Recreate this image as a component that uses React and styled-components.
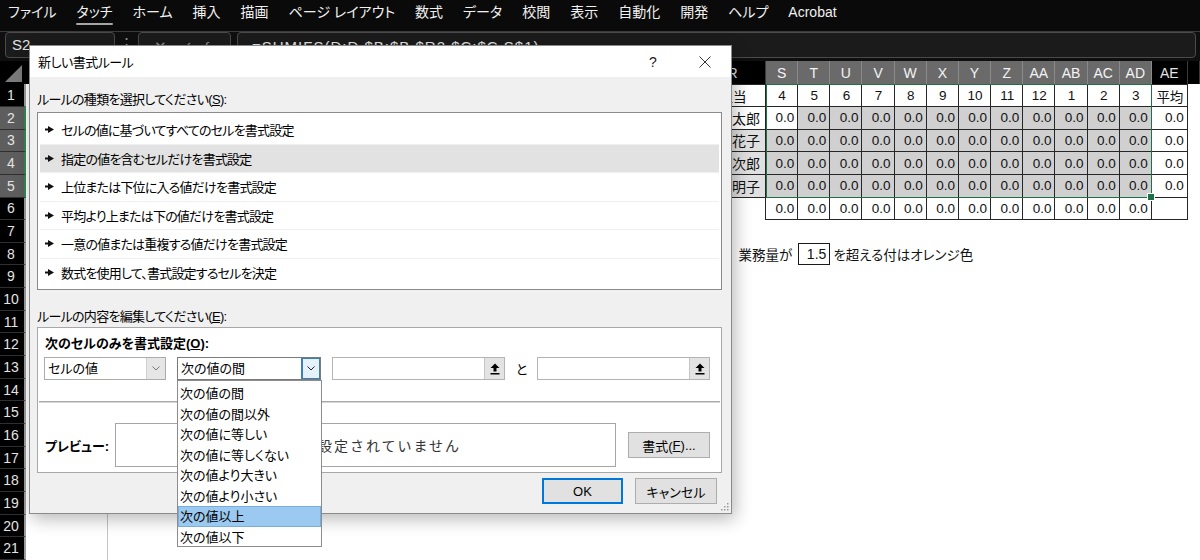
// Packages
import React from "react"
import styled, { createGlobalStyle, css } from "styled-components"

// Styles
const GlobalStyle = createGlobalStyle`
    html, body {
        margin: 0;
        padding: 0;
    }

    body {
        width: 1200px;
        height: 560px;
        overflow: hidden;
        background: #fff;
        font-family: "Liberation Sans", "Noto Sans CJK JP", sans-serif;
    }

    * {
        box-sizing: border-box;
    }
`

const Page = styled.div`
    position: relative;
    width: 1200px;
    height: 560px;
    overflow: hidden;
    display: flex;
    flex-direction: column;
`

/* Ribbon tabs */
const Ribbon = styled.nav`
    display: flex;
    align-items: center;
    gap: 20px;
    height: 36px;
    padding: 0 0 7px 8px;
    background: #0a0a0a;
    border-bottom: 1px solid #3a3a3a;
    color: #f0f0f0;
    font-size: 14px;
    font-feature-settings: "palt";
`

const Tab = styled.span`
    position: relative;
    line-height: 20px;
    white-space: nowrap;

    ${props =>
        props.$active &&
        css`
            &::after {
                content: "";
                position: absolute;
                left: 0;
                right: 0;
                bottom: -3px;
                height: 2px;
                border-radius: 1px;
                background: #a6a6a6;
            }
        `}
`

/* Formula bar */
const FormulaBar = styled.div`
    display: flex;
    align-items: flex-start;
    height: 33px;
    padding: 0 4px 0 5px;
    background: #0f0f0f;
`

const Field = styled.div`
    display: flex;
    align-items: center;
    height: 26px;
    border: 1px solid #4b4b4b;
    border-radius: 4px;
    background: #1b1b1b;
    color: #e2e2e2;
    font-size: 15px;
`

const NameBox = styled(Field)`
    width: 110px;
    padding: 0 0 2px 6px;
`

const Dots = styled.span`
    width: 23px;
    text-align: center;
    color: #9a9a9a;
    font-size: 15px;
    line-height: 24px;
`

const FuncBox = styled(Field)`
    width: 93px;
    justify-content: space-around;
    padding: 4px 8px 0;
    color: #8c8c8c;
`

const FormulaInput = styled(Field)`
    flex: 1;
    margin-left: 6px;
    padding: 3px 0 0 14px;
    letter-spacing: 1px;
`

/* Sheet */
const SheetArea = styled.div`
    position: relative;
    flex: 1;
`

const Grid = styled.div`
    display: grid;
    grid-template-columns: 26px 82px 592px 66px repeat(12, 32.1667px) 36px 1fr;
    grid-template-rows: 23px repeat(21, 22.667px);
`

const Corner = styled.div`
    display: flex;
    align-items: flex-end;
    justify-content: flex-end;
    padding: 0 4px 2px 0;
    background: #000;
`

const ColHead = styled.div`
    display: flex;
    align-items: center;
    justify-content: center;
    background: ${props => (props.$selected ? "#6a6a6a" : "#000")};
    border-right: 1px solid ${props => (props.$selected ? "#8a8a8a" : "#3a3a3a")};
    color: ${props => (props.$selected ? "#f4f4f4" : "#e4e4e4")};
    font-size: 14px;
`

const RowHead = styled.div`
    display: flex;
    align-items: center;
    justify-content: center;
    padding-right: 2px;
    background: ${props => (props.$selected ? "#5e5e5e" : "#000")};
    border-bottom: 1px solid #2f2f2f;
    border-right: 2px solid ${props => (props.$selected ? "#2f8a54" : "#9c9c9c")};
    color: #e4e4e4;
    font-size: 14px;
`

const Spacer = styled.div`
    border-right: ${props => (props.$line ? "1px solid #c4c4c4" : "none")};
`

const Cell = styled.div`
    display: flex;
    align-items: center;
    justify-content: ${props =>
        props.$align === "right" ? "flex-end" : props.$align === "center" ? "center" : "flex-start"};
    padding: 0 ${props => (props.$align === "right" ? "3px" : "2px")} 0 3px;
    background: ${props => props.$fill || "#fff"};
    border-right: ${props => (props.$box ? "1px solid #262626" : "none")};
    border-bottom: ${props => (props.$box && !props.$open ? "1px solid #262626" : "none")};
    border-top: ${props => (props.$top ? "1px solid #262626" : "none")};
    color: #111;
    font-size: 13.5px;
    white-space: nowrap;
`

const NameCell = styled(Cell)`
    font-size: 14px;
    padding-right: 5px;
`

const Note = styled.div`
    display: flex;
    align-items: center;
    grid-column: span ${props => props.$span};
    justify-content: ${props => (props.$end ? "flex-end" : "flex-start")};
    padding: 0 ${props => (props.$end ? "6px" : "0")} 0 3px;
    color: #111;
    font-size: 13.5px;
    font-feature-settings: "palt";
    white-space: nowrap;
`

const ValueBox = styled.div`
    display: flex;
    align-items: center;
    justify-content: flex-end;
    padding-right: 3px;
    border: 1px solid #1a1a1a;
    color: #111;
    font-size: 14px;
`

const Selection = styled.div`
    position: absolute;
    top: 23px;
    left: 766px;
    width: 386.2px;
    height: 113.3px;
    border: 1px solid #1e7145;
    pointer-events: none;

    &::after {
        content: "";
        position: absolute;
        right: -4px;
        bottom: -4px;
        width: 6px;
        height: 6px;
        background: #1e7145;
        border: 1px solid #fff;
    }
`

/* Dialog */
const Dialog = styled.div`
    position: absolute;
    left: 29px;
    top: 45px;
    width: 703px;
    height: 469px;
    display: flex;
    flex-direction: column;
    background: #f0f0f0;
    border: 1px solid #8a8a8a;
    box-shadow: 3px 5px 16px rgba(0, 0, 0, 0.28);
    color: #000;
    font-size: 13px;
    font-feature-settings: "palt";
`

const TitleBar = styled.div`
    display: flex;
    align-items: center;
    height: 31px;
    background: #fff;
`

const Title = styled.span`
    flex: 1;
    padding-left: 8px;
    font-size: 13px;
    letter-spacing: -0.5px;
`

const TitleButton = styled.span`
    display: flex;
    align-items: center;
    justify-content: center;
    width: 52px;
    height: 31px;
    color: #222;
    font-size: 14px;
`

const Body = styled.div`
    flex: 1;
    display: flex;
    flex-direction: column;
    padding: 0 9px 0 7px;
`

const Label = styled.div`
    margin-top: ${props => props.$top}px;
    line-height: 18px;
    letter-spacing: -0.7px;
`

const ListBox = styled.div`
    height: 178px;
    margin-top: 3px;
    padding: 3px 2px 0;
    border: 1px solid #8a8a8a;
    background: #fff;
`

const RuleItem = styled.div`
    display: flex;
    align-items: center;
    gap: 7px;
    height: 28.5px;
    padding-left: 5px;
    background: ${props => (props.$selected ? "#e2e2e2" : "#fff")};
    border-bottom: ${props => (props.$last ? "none" : "1px solid #efefef")};
    letter-spacing: -0.8px;
`

const GroupBox = styled.div`
    display: flex;
    flex-direction: column;
    height: 146px;
    margin-top: 1px;
    border: 1px solid #a8a8a8;
    background: #fff;
`

const EditSection = styled.div`
    height: 73px;
    padding: 7px 6px 0;
`

const BoldLabel = styled.div`
    padding-left: 1px;
    line-height: 18px;
    font-weight: bold;
`

const Controls = styled.div`
    display: flex;
    align-items: center;
    gap: 11px;
    margin-top: 4px;
`

const Combo = styled.div`
    display: flex;
    width: ${props => props.$width}px;
    height: 23px;
    border: 1px solid ${props => (props.$open ? "#7a7a7a" : "#acacac")};
    background: #fff;
`

const ComboText = styled.span`
    flex: 1;
    padding-left: 3px;
    line-height: 21px;
`

const ComboButton = styled.span`
    display: flex;
    align-items: center;
    justify-content: center;
    width: 19px;
    background: ${props => (props.$open ? "#e5f1fb" : "#e6e6e6")};
    border-left: 1px solid ${props => (props.$open ? "#3c7fb1" : "#cfcfcf")};
    box-shadow: ${props => (props.$open ? "inset 0 0 0 1px #3c7fb1" : "none")};
`

const RefInput = styled.div`
    display: flex;
    justify-content: flex-end;
    width: ${props => props.$width}px;
    height: 23px;
    border: 1px solid #b4b4b4;
    background: #fff;
`

const RefButton = styled.span`
    display: flex;
    align-items: center;
    justify-content: center;
    width: 20px;
    background: #e3e3e3;
    border-left: 1px solid #c6c6c6;
`

const Joiner = styled.span`
    width: 10px;
    text-align: center;
    font-size: 13px;
`

const Divider = styled.div`
    height: 2px;
    margin: 0 1px;
    border-top: 1px solid #a9a9a9;
    border-bottom: 1px solid #d6d6d6;
`

const PreviewRow = styled.div`
    display: flex;
    align-items: center;
    padding: 20px 11px 5px 7px;
`

const PreviewLabel = styled.span`
    width: 70px;
    font-weight: bold;
`

const PreviewBox = styled.div`
    display: flex;
    align-items: center;
    justify-content: center;
    width: 501px;
    height: 44px;
    border: 1px solid #a5a5a5;
    color: #333;
    font-size: 14px;
    letter-spacing: 2px;
    font-feature-settings: normal;
`

const Button = styled.span`
    display: flex;
    align-items: center;
    justify-content: center;
    width: ${props => props.$width}px;
    height: 26px;
    margin-left: ${props => props.$gap || 0}px;
    background: #e1e1e1;
    border: 1px solid ${props => (props.$primary ? "#0078d7" : "#adadad")};
    box-shadow: ${props => (props.$primary ? "inset 0 0 0 1px #0078d7" : "none")};
    font-size: 13px;
`

const Footer = styled.div`
    display: flex;
    justify-content: flex-end;
    gap: 12px;
    margin-top: 5px;
    padding-right: 5px;
`

const Grip = styled.svg`
    position: absolute;
    right: 2px;
    bottom: 2px;
`

const Dropdown = styled.ul`
    position: absolute;
    left: 147px;
    top: 334px;
    width: 145px;
    height: 167px;
    margin: 0;
    padding: 2px 0 0;
    list-style: none;
    background: #fff;
    border: 1px solid #8c8c8c;
`

const Option = styled.li`
    height: 20.5px;
    padding-left: 1px;
    line-height: 19px;
    background: ${props => (props.$selected ? "#9bc9ef" : "transparent")};
    border: 1px solid ${props => (props.$selected ? "#77ade0" : "transparent")};
    white-space: nowrap;
`

// Data
const tabs = ["ファイル", "タッチ", "ホーム", "挿入", "描画", "ページ レイアウト", "数式", "データ", "校閲", "表示", "自動化", "開発", "ヘルプ", "Acrobat"]

const columns = ["S", "T", "U", "V", "W", "X", "Y", "Z", "AA", "AB", "AC", "AD"]
const months = [4, 5, 6, 7, 8, 9, 10, 11, 12, 1, 2, 3]
const names = ["太郎", "花子", "次郎", "明子"]

const rules = [
    "セルの値に基づいてすべてのセルを書式設定",
    "指定の値を含むセルだけを書式設定",
    "上位または下位に入る値だけを書式設定",
    "平均より上または下の値だけを書式設定",
    "一意の値または重複する値だけを書式設定",
    "数式を使用して、書式設定するセルを決定",
]

const operators = ["次の値の間", "次の値の間以外", "次の値に等しい", "次の値に等しくない", "次の値より大きい", "次の値より小さい", "次の値以上", "次の値以下"]

// Icons
const Pointer = () => (
    <svg width="9" height="7" viewBox="0 0 9 7">
        <path d="M0 2.6h3V0L9 3.5 3 7V4.4H0z" fill="#111" />
    </svg>
)

const Chevron = ({ color }) => (
    <svg width="8" height="5" viewBox="0 0 8 5">
        <path d="M0.5 0.5L4 4 7.5 0.5" fill="none" stroke={color} strokeWidth="1" />
    </svg>
)

const Collapse = () => (
    <svg width="10" height="12" viewBox="0 0 10 12">
        <path d="M5 0.5L9.5 5H6.5V8.5H3.5V5H0.5z" fill="#000" />
        <rect x="0.5" y="10" width="9" height="1.5" fill="#000" />
    </svg>
)

const Close = () => (
    <svg width="12" height="12" viewBox="0 0 12 12">
        <path d="M0.5 0.5L11.5 11.5M11.5 0.5L0.5 11.5" stroke="#333" strokeWidth="1" />
    </svg>
)

function Sheet() {
    const rows = []

    for (let n = 1; n <= 21; n++) {
        const cells = []

        if (n === 1) {
            cells.push(<Cell key="r" $box $top $align="center">担当</Cell>)
            months.forEach(m => cells.push(<Cell key={m} $box $top $align="center">{m}</Cell>))
            cells.push(<Cell key="ae" $box $top $align="center">平均</Cell>)
        } else if (n >= 2 && n <= 5) {
            cells.push(
                <NameCell key="r" $box $align="right" $fill={n === 2 ? "#fff" : "#e0e0e0"}>
                    {names[n - 2]}
                </NameCell>
            )
            columns.forEach((c, i) =>
                cells.push(
                    <Cell key={c} $box $align="right" $fill={n === 2 && i === 0 ? "#fff" : "#d0d0d0"}>
                        0.0
                    </Cell>
                )
            )
            cells.push(<Cell key="ae" $box $align="right">0.0</Cell>)
        } else if (n === 6) {
            cells.push(<Cell key="r" $box $open />)
            columns.forEach(c => cells.push(<Cell key={c} $box $align="right">0.0</Cell>))
            cells.push(<Cell key="ae" $box />)
        } else if (n === 8) {
            cells.push(<Note key="a" $span={2} $end>業務量が</Note>)
            cells.push(<ValueBox key="v">1.5</ValueBox>)
            cells.push(<Note key="b" $span={12}>を超える付はオレンジ色</Note>)
        } else {
            cells.push(<Cell key="r" />)
            columns.forEach(c => cells.push(<Cell key={c} />))
            cells.push(<Cell key="ae" />)
        }

        rows.push(
            <React.Fragment key={n}>
                <RowHead $selected={n >= 2 && n <= 5}>{n}</RowHead>
                <Spacer $line />
                <Spacer />
                {cells}
                {n !== 8 && <Spacer />}
            </React.Fragment>
        )
    }

    return (
        <SheetArea>
            <Grid>
                <Corner>
                    <svg width="17" height="17" viewBox="0 0 17 17">
                        <path d="M17 0V17H0z" fill="#7a7a7a" />
                    </svg>
                </Corner>
                <ColHead />
                <ColHead />
                <ColHead>R</ColHead>
                {columns.map(c => (
                    <ColHead key={c} $selected>
                        {c}
                    </ColHead>
                ))}
                <ColHead>AE</ColHead>
                <ColHead />
                {rows}
            </Grid>
            <Selection />
        </SheetArea>
    )
}

function RuleDialog() {
    return (
        <Dialog>
            <TitleBar>
                <Title>新しい書式ルール</Title>
                <TitleButton>?</TitleButton>
                <TitleButton>
                    <Close />
                </TitleButton>
            </TitleBar>

            <Body>
                <Label $top={14}>
                    ルールの種類を選択してください(<u>S</u>):
                </Label>

                <ListBox>
                    {rules.map((rule, i) => (
                        <RuleItem key={rule} $selected={i === 1} $last={i === rules.length - 1}>
                            <Pointer />
                            {rule}
                        </RuleItem>
                    ))}
                </ListBox>

                <Label $top={18}>
                    ルールの内容を編集してください(<u>E</u>):
                </Label>

                <GroupBox>
                    <EditSection>
                        <BoldLabel>
                            次のセルのみを書式設定(<u>O</u>):
                        </BoldLabel>

                        <Controls>
                            <Combo $width={122}>
                                <ComboText>セルの値</ComboText>
                                <ComboButton>
                                    <Chevron color="#777" />
                                </ComboButton>
                            </Combo>

                            <Combo $width={144} $open>
                                <ComboText>次の値の間</ComboText>
                                <ComboButton $open>
                                    <Chevron color="#222" />
                                </ComboButton>
                            </Combo>

                            <RefInput $width={173}>
                                <RefButton>
                                    <Collapse />
                                </RefButton>
                            </RefInput>

                            <Joiner>と</Joiner>

                            <RefInput $width={173}>
                                <RefButton>
                                    <Collapse />
                                </RefButton>
                            </RefInput>
                        </Controls>
                    </EditSection>

                    <Divider />

                    <PreviewRow>
                        <PreviewLabel>プレビュー:</PreviewLabel>
                        <PreviewBox>書式が設定されていません</PreviewBox>
                        <Button $width={82} $gap={12}>
                            書式(<u>F</u>)...
                        </Button>
                    </PreviewRow>
                </GroupBox>

                <Footer>
                    <Button $width={81} $primary>
                        OK
                    </Button>
                    <Button $width={82}>キャンセル</Button>
                </Footer>
            </Body>

            <Grip width="9" height="9" viewBox="0 0 9 9">
                {[
                    [7, 1],
                    [4, 4],
                    [7, 4],
                    [1, 7],
                    [4, 7],
                    [7, 7],
                ].map(([x, y]) => (
                    <rect key={`${x}-${y}`} x={x} y={y} width="1.5" height="1.5" fill="#9a9a9a" />
                ))}
            </Grip>

            <Dropdown>
                {operators.map(op => (
                    <Option key={op} $selected={op === "次の値以上"}>
                        {op}
                    </Option>
                ))}
            </Dropdown>
        </Dialog>
    )
}

function App() {
    return (
        <Page>
            <GlobalStyle />

            <Ribbon>
                {tabs.map(tab => (
                    <Tab key={tab} $active={tab === "タッチ"}>
                        {tab}
                    </Tab>
                ))}
            </Ribbon>

            <FormulaBar>
                <NameBox>S2</NameBox>
                <Dots>⋮</Dots>
                <FuncBox>
                    <span>✕</span>
                    <span>✓</span>
                    <span>
                        <i>f</i>x
                    </span>
                </FuncBox>
                <FormulaInput>=SUMIFS(D:D,$B:$B,$R2,$C:$C,S$1)</FormulaInput>
            </FormulaBar>

            <Sheet />
            <RuleDialog />
        </Page>
    )
}

export default App
